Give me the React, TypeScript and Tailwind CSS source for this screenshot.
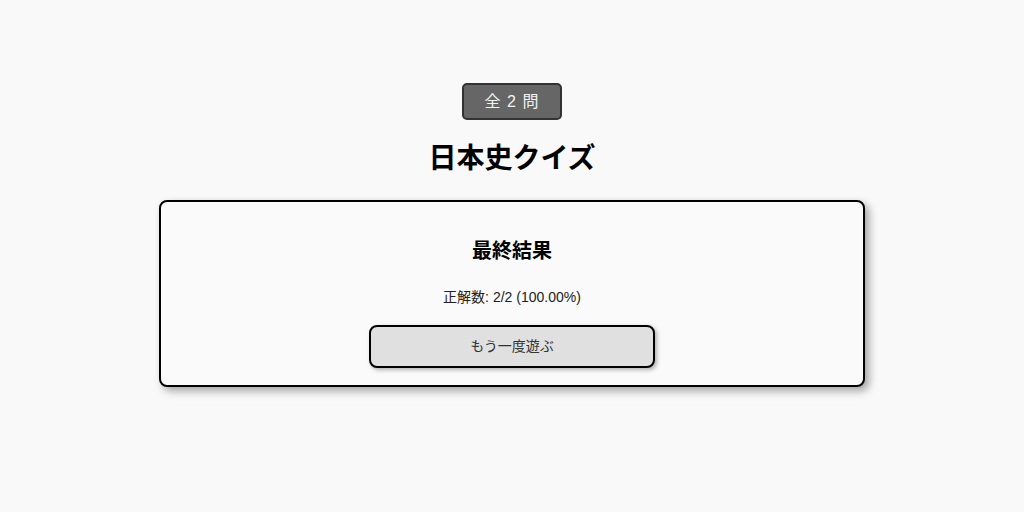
export default function App() {
  const total = 2;
  const correct = 2;
  const rate = ((correct / total) * 100).toFixed(2);

  return (
    <div
      className="min-h-[512px] w-full bg-[#f9f9f9] flex flex-col items-center pt-[83px] text-black"
      style={{ fontFamily: '"Liberation Sans", "Noto Sans CJK JP", sans-serif' }}
    >
      <div className="h-[37px] w-[100px] rounded-[5px] border-2 border-[#333] bg-[#666] text-[#f2f2f2] text-[16px] flex items-center justify-center tracking-[1px]">
        全 {total} 問
      </div>

      <h1 className="mt-[21px] h-[36px] text-[28px] leading-[36px] font-bold">日本史クイズ</h1>

      <div className="mt-[23px] w-[706px] h-[187px] rounded-[8px] border-2 border-black bg-[#fafafa] shadow-[4px_4px_8px_rgba(0,0,0,0.35)] flex flex-col items-center pt-[35px]">
        <h2 className="text-[20px] leading-[28px] font-bold">最終結果</h2>
        <p className="mt-[22px] text-[14px] leading-[20px] text-[#222]">
          正解数: {correct}/{total} ({rate}%)
        </p>
        <button className="mt-[18px] w-[286px] h-[43px] rounded-[8px] border-2 border-black bg-[#e0e0e0] text-[14px] text-[#333] shadow-[2px_2px_4px_rgba(0,0,0,0.3)]">
          もう一度遊ぶ
        </button>
      </div>
    </div>
  );
}
